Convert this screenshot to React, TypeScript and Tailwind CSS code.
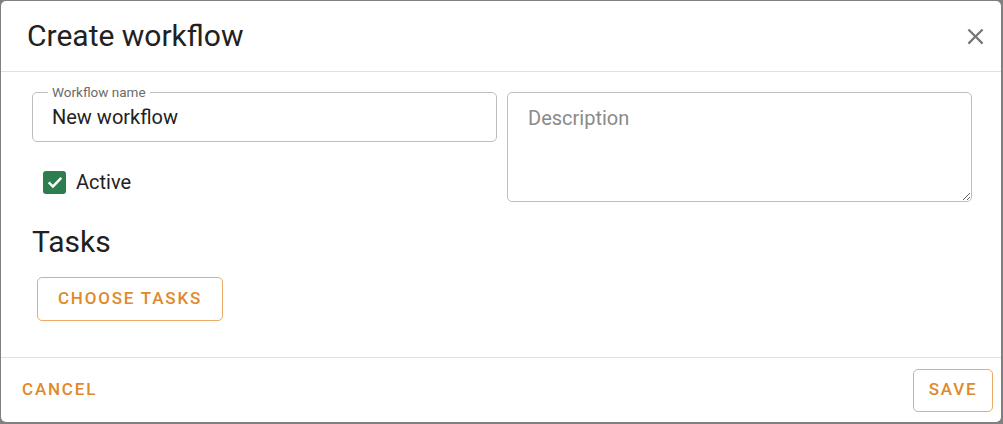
import React, { useState } from 'react';

const font = { fontFamily: 'Roboto, "Liberation Sans", sans-serif' };

export default function App() {
  const [name, setName] = useState('New workflow');
  const [description, setDescription] = useState('');
  const [active, setActive] = useState(true);

  return (
    <div className="w-[1003px] h-[424px] bg-[#808080] pt-px pl-px" style={font}>
      <div className="w-[1000px] h-[421px] bg-white rounded-[5px] flex flex-col overflow-hidden">
        {/* Header */}
        <div className="h-[71px] shrink-0 flex items-center justify-between pl-[26px] pr-[12px] border-b border-[#e0e0e0]">
          <h1 className="text-[30px] leading-[36px] text-[#212121]">Create workflow</h1>
          <button className="w-[27px] h-[27px] flex items-center justify-center text-[#757575]">
            <svg viewBox="0 0 24 24" width="27" height="27" fill="currentColor">
              <path d="M19 6.41 17.59 5 12 10.59 6.41 5 5 6.41 10.59 12 5 17.59 6.41 19 12 13.41 17.59 19 19 17.59 13.41 12z" />
            </svg>
          </button>
        </div>

        {/* Content */}
        <div className="flex-1 pt-[20px] pl-[31px] pr-[29px]">
          <div className="grid grid-cols-2 gap-[10px]">
            <div>
              <div className="relative h-[50px] border border-[#bdbdbd] rounded-[5px]">
                <label className="absolute left-[15px] -top-[9px] bg-white px-[4px] text-[13.5px] leading-[16px] text-[#6b6b6b]">
                  Workflow name
                </label>
                <input
                  className="w-full h-full pl-[19px] pr-[14px] text-[20px] text-[#222] outline-none bg-transparent"
                  value={name}
                  onChange={(e) => setName(e.target.value)}
                />
              </div>
              <label className="mt-[28px] pl-[11px] flex items-center gap-[10px] cursor-pointer">
                <span
                  onClick={() => setActive(!active)}
                  className={
                    active
                      ? 'w-[23px] h-[23px] rounded-[3px] bg-[#2e7d4f] flex items-center justify-center'
                      : 'w-[23px] h-[23px] rounded-[3px] border-2 border-[#757575]'
                  }
                >
                  {active && (
                    <svg viewBox="0 0 24 24" width="20" height="20" fill="none" stroke="white" strokeWidth="3">
                      <path d="M4.5 12.5 9.5 17.5 19.5 7" />
                    </svg>
                  )}
                </span>
                <span className="text-[20px] leading-[24px] text-[#222]">Active</span>
              </label>
            </div>
            <textarea
              className="h-[110px] border border-[#bdbdbd] rounded-[5px] pt-[13px] px-[20px] text-[20px] leading-[24px] text-[#222] placeholder:text-[#8a8a8a] outline-none"
              placeholder="Description"
              value={description}
              onChange={(e) => setDescription(e.target.value)}
            />
          </div>

          <h2 className="mt-[22px] text-[30px] leading-[36px] text-[#212121]">Tasks</h2>
          <button className="mt-[17px] ml-[5px] w-[186px] h-[44px] border border-[#e0892b]/70 rounded-[5px] text-[17px] font-medium tracking-[1.8px] text-[#e0892b]">
            CHOOSE TASKS
          </button>
        </div>

        {/* Footer */}
        <div className="h-[65px] shrink-0 border-t border-[#e0e0e0] flex items-center justify-between pl-[9px] pr-[8px]">
          <button className="h-[43px] px-[12px] rounded-[5px] text-[17px] font-medium tracking-[1.8px] text-[#e0892b]">
            CANCEL
          </button>
          <button className="h-[43px] w-[80px] border border-[#e0892b]/70 rounded-[5px] text-[17px] font-medium tracking-[1.8px] text-[#e0892b]">
            SAVE
          </button>
        </div>
      </div>
    </div>
  );
}
